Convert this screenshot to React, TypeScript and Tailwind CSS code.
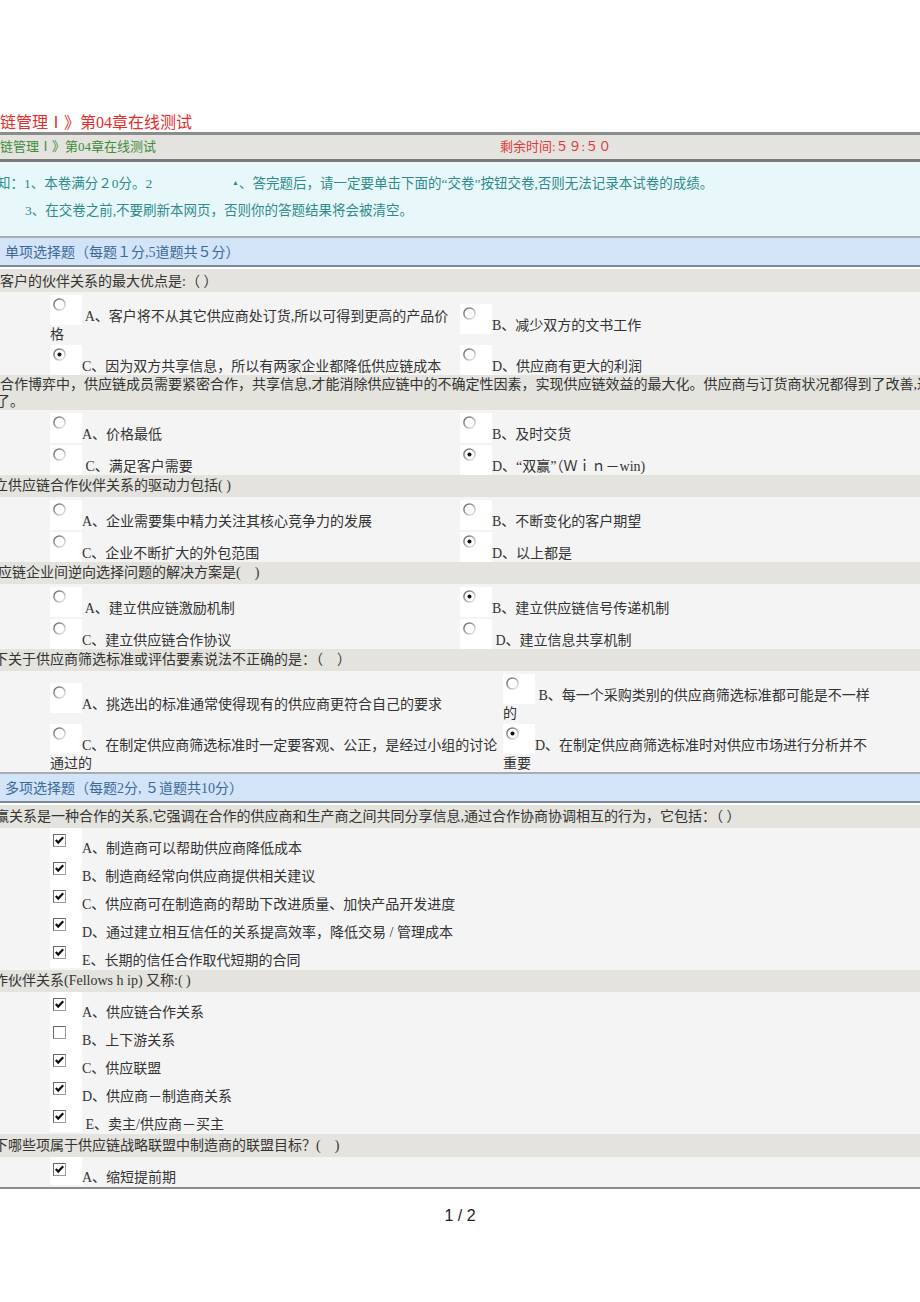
import React from "react";

const Radio = ({ on }: { on?: boolean }) => (
  <svg width="13" height="13" viewBox="0 0 13 13" className="block">
    <defs>
      <linearGradient id="rgrad" x1="0" y1="0" x2="1" y2="1">
        <stop offset="0" stopColor="#5e5e5e" />
        <stop offset="0.5" stopColor="#a8a8a8" />
        <stop offset="1" stopColor="#f2f2f2" />
      </linearGradient>
    </defs>
    <circle cx="6.5" cy="6.5" r="5.6" fill="#fff" stroke="url(#rgrad)" strokeWidth="1.5" />
    {on && <circle cx="6.5" cy="6.5" r="2" fill="#111" />}
  </svg>
);

const Check = ({ on }: { on?: boolean }) => (
  <svg width="13" height="13" viewBox="0 0 13 13" className="block">
    <rect x="0.5" y="0.5" width="12" height="12" fill="#fff" stroke="#9a9a9a" />
    <path d="M0.5 12.5 V0.5 H12.5" fill="none" stroke="#666" />
    {on && <path d="M2.8 6 L5.2 8.6 L10.2 3.2" fill="none" stroke="#111" strokeWidth="2.2" />}
  </svg>
);

type O = { on?: boolean; text: string; wrap?: string };

const Opt = ({ o, right }: { o: O; right?: boolean }) => {
  const cls = right
    ? o.wrap
      ? "col-start-3 whitespace-nowrap h-[48px]"
      : "col-start-3 whitespace-nowrap h-[30px]"
    : o.wrap
    ? "col-start-2 whitespace-nowrap h-[48px]"
    : "col-start-2 whitespace-nowrap h-[30px]";
  return (
    <div className={cls}>
      <span className="inline-block w-[32px] h-[30px] bg-white align-[-4px] pt-[3px] pl-[3px]">
        <Radio on={o.on} />
      </span>
      {o.text}
      {o.wrap && (
        <>
          <br />
          {o.wrap}
        </>
      )}
    </div>
  );
};

const Single = ({ opts, wide }: { opts: O[]; wide?: boolean }) => (
  <div
    className={
      wide
        ? "grid grid-cols-[50px_453px_1fr] items-center gap-y-[2px] pt-[3px] bg-[#f4f4f4] leading-[18px] text-[#333]"
        : "grid grid-cols-[50px_410px_1fr] items-center gap-y-[2px] pt-[3px] bg-[#f4f4f4] leading-[18px] text-[#333]"
    }
  >
    <Opt o={opts[0]} />
    <Opt o={opts[1]} right />
    <Opt o={opts[2]} />
    <Opt o={opts[3]} right />
  </div>
);

const Multi = ({ opts }: { opts: O[] }) => (
  <div className="bg-[#f4f4f4] pl-[50px] pb-[2px] leading-[18px] text-[#333]">
    {opts.map((o, i) => (
      <div key={i} className="h-[28px] whitespace-nowrap">
        <span className="inline-block w-[32px] h-[28px] bg-white align-[-3px] pt-[6px] pl-[3px]">
          <Check on={o.on} />
        </span>
        {o.text}
      </div>
    ))}
  </div>
);

const SectionHead = ({ children }: { children: React.ReactNode }) => (
  <div className="border-t-2 border-t-[#a9adb3] border-b-2 border-b-[#7d8896] mb-[2px] bg-[#d3e3f8] h-[31px] pt-[2px] leading-[25px] pl-[5px] text-[#3b6a9a] whitespace-nowrap">
    {children}
  </div>
);

export default function App() {
  return (
    <div className="w-[920px] h-[1302px] overflow-hidden bg-white text-[14px] font-['Liberation_Serif','Noto_Sans_CJK_SC',serif]">
      <div className="h-[113px]" />
      <div className="text-[16px] leading-[19px] text-[#e42d2d] whitespace-nowrap">链管理Ⅰ》第04章在线测试</div>

      <div className="border-t-[3px] border-t-[#8c8c8c] border-b-[3px] border-b-[#7a7a7a] bg-[#e4e3df] h-[30px] leading-[24px] flex text-[13px] whitespace-nowrap">
        <span className="w-[500px] text-[#3d8d3d]">链管理Ⅰ》第04章在线测试</span>
        <span className="text-[#e03838]">剩余时间:５９:５０</span>
      </div>

      <div className="bg-[#e8f8fa] pt-[8px] pb-[12px] leading-[27px] text-[13.5px] text-[#2f8b8b] whitespace-nowrap">
        <div className="flex">
          <span className="w-[232px]">
            <span className="-ml-[3px]">知</span>：1、本卷满分２0分。2
          </span>
          <span>
            <span className="text-[7px] align-[3px]">▲</span>、答完题后，请一定要单击下面的“交卷”按钮交卷,否则无法记录本试卷的成绩。
          </span>
        </div>
        <div className="pl-[25px]">3、在交卷之前,不要刷新本网页，否则你的答题结果将会被清空。</div>
      </div>

      <SectionHead>单项选择题（每题１分,5道题共５分）</SectionHead>

      <div className="bg-[#e4e3de] text-[#333] whitespace-nowrap h-[23px] pt-[2px] leading-[21px]">客户的伙伴关系的最大优点是:（ ）</div>
      <Single
        opts={[
          { text: " A、客户将不从其它供应商处订货,所以可得到更高的产品价", wrap: "格" },
          { text: "B、减少双方的文书工作" },
          { text: "C、因为双方共享信息，所以有两家企业都降低供应链成本", on: true },
          { text: "D、供应商有更大的利润" },
        ]}
      />

      <div className="bg-[#e4e3de] text-[#333] whitespace-nowrap h-[35px] leading-[17px] pt-[1px]">
        <div>合作博弈中，供应链成员需要紧密合作，共享信息,才能消除供应链中的不确定性因素，实现供应链效益的最大化。供应商与订货商状况都得到了改善,达到</div>
        <div>
          <span className="-ml-[4px]">了</span>。
        </div>
      </div>
      <Single
        opts={[
          { text: "A、价格最低" },
          { text: "B、及时交货" },
          { text: " C、满足客户需要" },
          { text: "D、“双赢”（Ｗｉｎ－win)", on: true },
        ]}
      />

      <div className="bg-[#e4e3de] text-[#333] whitespace-nowrap h-[22px] leading-[22px]">
        <span className="-ml-[6px]">立</span>供应链合作伙伴关系的驱动力包括( )
      </div>
      <Single
        opts={[
          { text: "A、企业需要集中精力关注其核心竞争力的发展" },
          { text: "B、不断变化的客户期望" },
          { text: "C、企业不断扩大的外包范围" },
          { text: "D、以上都是", on: true },
        ]}
      />

      <div className="bg-[#e4e3de] text-[#333] whitespace-nowrap h-[22px] leading-[22px]">
        <span className="-ml-[2px]">应</span>链企业间逆向选择问题的解决方案是(　)
      </div>
      <Single
        opts={[
          { text: " A、建立供应链激励机制" },
          { text: "B、建立供应链信号传递机制", on: true },
          { text: "C、建立供应链合作协议" },
          { text: " D、建立信息共享机制" },
        ]}
      />

      <div className="bg-[#e4e3de] text-[#333] whitespace-nowrap h-[22px] leading-[22px]">
        <span className="-ml-[6px]">下</span>关于供应商筛选标准或评估要素说法不正确的是：（　）
      </div>
      <Single
        wide
        opts={[
          { text: "A、挑选出的标准通常使得现有的供应商更符合自己的要求" },
          { text: " B、每一个采购类别的供应商筛选标准都可能是不一样", wrap: "的" },
          { text: "C、在制定供应商筛选标准时一定要客观、公正，是经过小组的讨论", wrap: "通过的" },
          { text: "D、在制定供应商筛选标准时对供应市场进行分析并不", wrap: "重要", on: true },
        ]}
      />

      <SectionHead>多项选择题（每题2分, ５道题共10分）</SectionHead>

      <div className="bg-[#e4e3de] text-[#333] whitespace-nowrap h-[23px] leading-[23px]">
        <span className="-ml-[5px]">赢</span>关系是一种合作的关系,它强调在合作的供应商和生产商之间共同分享信息,通过合作协商协调相互的行为，它包括：（ ）
      </div>
      <Multi
        opts={[
          { text: "A、制造商可以帮助供应商降低成本", on: true },
          { text: "B、制造商经常向供应商提供相关建议", on: true },
          { text: "C、供应商可在制造商的帮助下改进质量、加快产品开发进度", on: true },
          { text: "D、通过建立相互信任的关系提高效率，降低交易 / 管理成本", on: true },
          { text: "E、长期的信任合作取代短期的合同", on: true },
        ]}
      />

      <div className="bg-[#e4e3de] text-[#333] whitespace-nowrap h-[22px] leading-[22px]">
        <span className="-ml-[6px]">作</span>伙伴关系(Fellows h ip) 又称:( )
      </div>
      <Multi
        opts={[
          { text: "A、供应链合作关系", on: true },
          { text: "B、上下游关系" },
          { text: "C、供应联盟", on: true },
          { text: "D、供应商－制造商关系", on: true },
          { text: " E、卖主/供应商－买主", on: true },
        ]}
      />

      <div className="bg-[#e4e3de] text-[#333] whitespace-nowrap h-[23px] leading-[23px]">
        <span className="-ml-[6px]">下</span>哪些项属于供应链战略联盟中制造商的联盟目标？(　)
      </div>
      <Multi opts={[{ text: "A、缩短提前期", on: true }]} />
      <div className="h-[2px] bg-[#8c8c8c]" />

      <div className="pt-[18px] text-center text-[16px] leading-[18px] text-[#222] font-['Liberation_Sans',sans-serif]">1 / 2</div>
    </div>
  );
}
